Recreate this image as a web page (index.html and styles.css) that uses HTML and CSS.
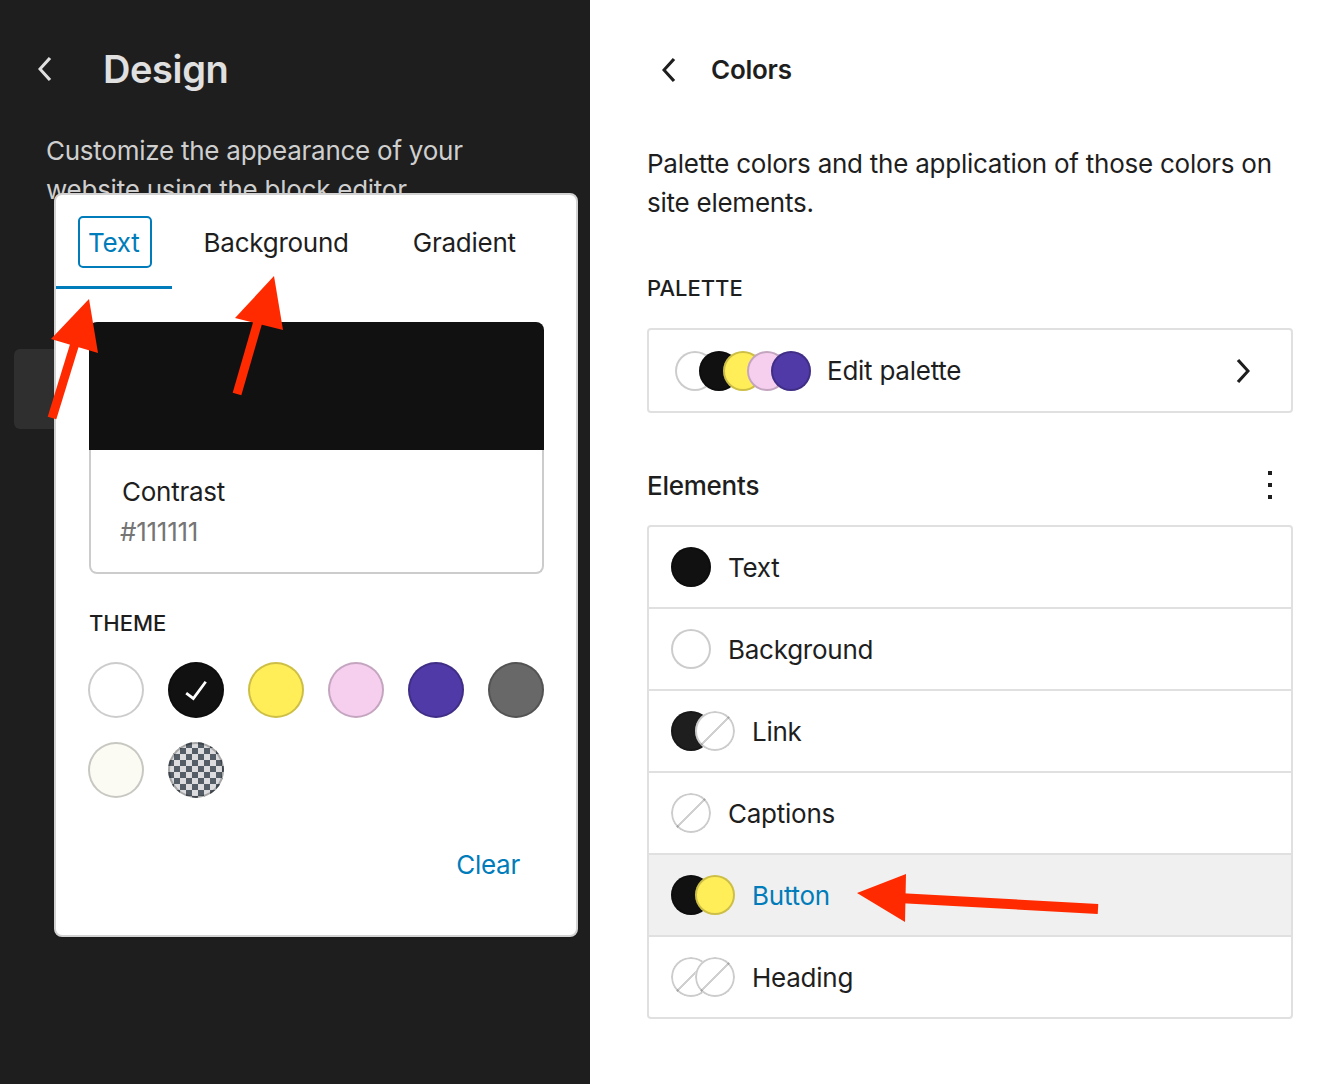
FILE: index.html
```html
<!DOCTYPE html>
<html lang="en">
<head>
<meta charset="utf-8">
<title>Design – Colors</title>
<link rel="stylesheet" href="styles.css">
</head>
<body>
<div class="app">
  <aside class="sidebar">
    <header class="sb-head">
      <svg class="icon48" viewBox="0 0 24 24" width="48" height="48"><path d="M14.6 7l-1.2-1L8 12l5.4 6 1.2-1-4.6-5z" fill="#e0e0e0"/></svg>
      <h1 class="sb-title">Design</h1>
    </header>
    <p class="sb-desc">Customize the appearance of your website using the block editor.</p>
    <div class="sb-item"></div>

    <div class="popover">
      <div class="tabs">
        <div class="tab is-active"><span>Text</span></div>
        <div class="tab"><span>Background</span></div>
        <div class="tab"><span>Gradient</span></div>
      </div>
      <div class="pop-body">
        <div class="preview"></div>
        <div class="preview-info">
          <div class="pi-name">Contrast</div>
          <div class="pi-hex">#111111</div>
        </div>
        <div class="label theme-label">THEME</div>
        <div class="swatches">
          <div class="swatch sw-white"></div>
          <div class="swatch sw-black"><svg viewBox="0 0 24 24" width="44" height="44"><path d="M16.7 7.1l-6.3 8.5-3.3-2.5-.9 1.2 4.5 3.4L17.9 7.9z" fill="#fff"/></svg></div>
          <div class="swatch sw-yellow"></div>
          <div class="swatch sw-pink"></div>
          <div class="swatch sw-purple"></div>
          <div class="swatch sw-gray"></div>
          <div class="swatch sw-cream"></div>
          <div class="swatch sw-checker"></div>
        </div>
        <div class="clear-row"><span class="clear-btn">Clear</span></div>
      </div>
    </div>
  </aside>

  <main class="panel">
    <header class="p-head">
      <svg class="icon48" viewBox="0 0 24 24" width="48" height="48"><path d="M14.6 7l-1.2-1L8 12l5.4 6 1.2-1-4.6-5z" fill="#1e1e1e"/></svg>
      <h2 class="p-title">Colors</h2>
    </header>
    <p class="p-desc">Palette colors and the application of those colors on site elements.</p>
    <div class="label palette-label">PALETTE</div>
    <div class="palette-box">
      <div class="stack">
        <span class="dot c-white"></span>
        <span class="dot c-black"></span>
        <span class="dot c-yellow"></span>
        <span class="dot c-pink"></span>
        <span class="dot c-purple"></span>
      </div>
      <span class="pb-text">Edit palette</span>
      <svg class="icon48 pb-chev" viewBox="0 0 24 24" width="48" height="48"><path d="M10.6 6L9.4 7l4.6 5-4.6 5 1.2 1 5.4-6z" fill="#1e1e1e"/></svg>
    </div>
    <div class="el-head">
      <span class="el-title">Elements</span>
      <svg class="icon48" viewBox="0 0 24 24" width="48" height="48"><path d="M13 19h-2v-2h2v2zm0-6h-2v-2h2v2zm0-6h-2V5h2v2z" fill="#1e1e1e"/></svg>
    </div>
    <div class="el-list">
      <div class="el-row"><div class="stack"><span class="dot c-black"></span></div><span>Text</span></div>
      <div class="el-row"><div class="stack"><span class="dot c-white"></span></div><span>Background</span></div>
      <div class="el-row"><div class="stack"><span class="dot c-dark"></span><span class="dot c-none"></span></div><span>Link</span></div>
      <div class="el-row"><div class="stack"><span class="dot c-none"></span></div><span>Captions</span></div>
      <div class="el-row is-hover"><div class="stack"><span class="dot c-black"></span><span class="dot c-yellow"></span></div><span>Button</span></div>
      <div class="el-row"><div class="stack"><span class="dot c-none"></span><span class="dot c-none"></span></div><span>Heading</span></div>
    </div>
  </main>
</div>

<svg class="annotations" viewBox="0 0 1334 1084" width="1334" height="1084">
  <g fill="#ff2a00" stroke="#ff2a00">
    <line x1="76" y1="340" x2="52" y2="418" stroke-width="9"/>
    <polygon points="89,299 51,339 98,353" stroke="none"/>
    <line x1="259" y1="318" x2="237" y2="394" stroke-width="9"/>
    <polygon points="274,276 235,318 283,330" stroke="none"/>
    <line x1="898" y1="898" x2="1098" y2="909" stroke-width="10"/>
    <polygon points="857,893 906,874 905,922" stroke="none"/>
  </g>
</svg>
</body>
</html>
```

FILE: styles.css
```css
* { box-sizing: border-box; }

html, body {
  margin: 0;
  padding: 0;
}

body {
  width: 1334px;
  height: 1084px;
  overflow: hidden;
  position: relative;
  font-family: Inter, "Noto Sans", "Liberation Sans", sans-serif;
  color: #1e1e1e;
  background: #fff;
  letter-spacing: -0.25px;
}

.app {
  display: flex;
  height: 1084px;
}

.icon48 {
  display: block;
  flex: none;
}

/* ---------- left sidebar ---------- */
.sidebar {
  width: 590px;
  flex: none;
  background: #1e1e1e;
  position: relative;
  padding-top: 45px;
}

.sb-head {
  display: flex;
  align-items: center;
  padding-left: 22px;
  height: 48px;
}

.sb-title {
  margin: 0 0 0 33px;
  font-size: 38px;
  line-height: 48px;
  font-weight: 600;
  color: #e0e0e0;
  letter-spacing: -0.4px;
}

.sb-desc {
  margin: 38px 0 0;
  padding: 0 100px 0 46px;
  font-size: 26px;
  line-height: 39px;
  color: #cfcfcf;
}

.sb-item {
  margin: 140px 0 0 14px;
  width: 400px;
  height: 80px;
  border-radius: 6px;
  background: #2f2f2f;
}

/* ---------- popover ---------- */
.popover {
  position: absolute;
  left: 54px;
  top: 193px;
  width: 524px;
  height: 744px;
  background: #fff;
  border: 2px solid #d2d2d2;
  border-radius: 8px;
  box-shadow: 0 1px 2px rgba(0,0,0,0.15);
}

.tabs {
  display: flex;
  height: 94px;
}

.tab {
  position: relative;
  display: flex;
  align-items: center;
  padding: 0 32px;
  font-size: 26px;
  color: #1e1e1e;
}

.tab.is-active {
  color: #007cba;
}

.tab.is-active::before {
  content: "";
  position: absolute;
  left: 22px;
  right: 20px;
  top: 21px;
  bottom: 21px;
  border: 2px solid #007cba;
  border-radius: 5px;
}

.tab.is-active::after {
  content: "";
  position: absolute;
  left: 0;
  right: 0;
  bottom: 0;
  height: 3px;
  background: #007cba;
}

.pop-body {
  padding: 33px 32px 0 33px;
}

.preview {
  height: 128px;
  background: #111111;
  border-radius: 8px 8px 0 0;
}

.preview-info {
  height: 124px;
  border: 2px solid #cccccc;
  border-top: none;
  border-radius: 0 0 8px 8px;
  padding: 22px 32px 0 31px;
  font-size: 26px;
  line-height: 40px;
}

.pi-name { color: #1e1e1e; }
.pi-hex { color: #757575; margin-left: -2px; }

.label {
  font-size: 22px;
  line-height: 32px;
  font-weight: 500;
  text-transform: uppercase;
  color: #1e1e1e;
  letter-spacing: 0;
}

.theme-label {
  margin-top: 33px;
}

.swatches {
  margin-top: 23px;
  display: grid;
  grid-template-columns: repeat(6, 56px);
  justify-content: space-between;
  row-gap: 24px;
  margin-left: -1px;
}

.swatch {
  width: 56px;
  height: 56px;
  border-radius: 50%;
  box-shadow: inset 0 0 0 2px rgba(0,0,0,0.2);
  display: flex;
  align-items: center;
  justify-content: center;
}

.sw-white { background: #ffffff; }
.sw-black { background: #111111; }
.sw-yellow { background: #ffee58; }
.sw-pink { background: #f6cfef; }
.sw-purple { background: #503aa8; }
.sw-gray { background: #686868; }
.sw-cream { background: #fbfaf3; }
.sw-checker {
  background: repeating-conic-gradient(#555d66 0 25%, #dcdcde 0 50%) 0 0 / 12px 12px;
  box-shadow: inset 0 0 0 2px rgba(0,0,0,0.25);
}

.clear-row {
  margin-top: 30px;
  display: flex;
  justify-content: flex-end;
}

.clear-btn {
  height: 72px;
  padding: 0 24px;
  display: flex;
  align-items: center;
  font-size: 26px;
  color: #007cba;
}

/* ---------- right panel ---------- */
.panel {
  flex: 1;
  padding: 46px 41px 0 57px;
}

.p-head {
  display: flex;
  align-items: center;
  height: 48px;
  margin-left: -1px;
}

.p-title {
  margin: 0 0 0 17px;
  font-size: 26px;
  line-height: 48px;
  font-weight: 600;
}

.p-desc {
  margin: 50px 0 0;
  font-size: 26px;
  line-height: 39px;
  color: #1e1e1e;
}

.palette-label {
  margin-top: 50px;
}

.palette-box {
  margin-top: 24px;
  height: 85px;
  border: 2px solid #e0e0e0;
  border-radius: 4px;
  display: flex;
  align-items: center;
  padding: 0 25px 0 26px;
}

.stack {
  display: flex;
  flex: none;
}

.dot {
  display: block;
  width: 40px;
  height: 40px;
  border-radius: 50%;
  box-shadow: inset 0 0 0 2px rgba(0,0,0,0.2);
  position: relative;
}

.dot + .dot {
  margin-left: -16px;
}

.c-white { background: #fff; }
.c-black { background: #111; }
.c-dark { background: #1e1e1e; }
.c-yellow { background: #ffee58; }
.c-pink { background: #f6cfef; }
.c-purple { background: #503aa8; }
.c-none {
  background:
    linear-gradient(-45deg, transparent 48.5%, #d0d0d0 48.5%, #d0d0d0 51.5%, transparent 51.5%),
    #fff;
}

.pb-text {
  margin-left: 16px;
  font-size: 26px;
  flex: 1;
}

.el-head {
  margin-top: 48px;
  height: 48px;
  display: flex;
  align-items: center;
  justify-content: space-between;
  margin-right: -1px;
}

.el-title {
  font-size: 26px;
  font-weight: 500;
}

.el-list {
  margin-top: 16px;
  border: 2px solid #e0e0e0;
  border-radius: 4px;
}

.el-row {
  height: 80px;
  display: flex;
  align-items: center;
  gap: 17px;
  padding-left: 22px;
  font-size: 26px;
}

.el-row + .el-row {
  border-top: 2px solid #e0e0e0;
  height: 82px;
}

.el-row.is-hover {
  background: #f0f0f0;
  color: #007cba;
}

/* ---------- annotation arrows ---------- */
.annotations {
  position: absolute;
  left: 0;
  top: 0;
  pointer-events: none;
}
```
